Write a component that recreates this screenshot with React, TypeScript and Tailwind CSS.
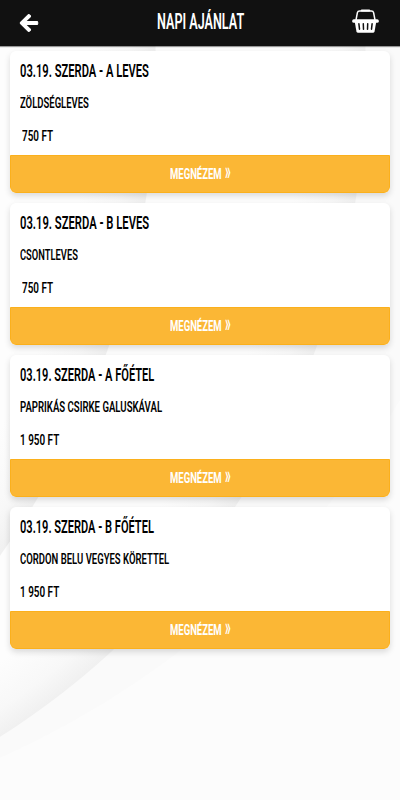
import { useLayoutEffect, useRef, useState } from "react";
import { FaArrowLeft } from "react-icons/fa";

type Offer = {
  title: string;
  titleWidth: number;
  dish: string;
  dishWidth: number;
  price: string;
  priceWidth: number;
  priceClass: string;
};

const offers: Offer[] = [
  { title: "03.19. SZERDA - A LEVES", titleWidth: 129, dish: "ZÖLDSÉGLEVES", dishWidth: 69, price: "750 FT", priceWidth: 31, priceClass: "ml-[2px]" },
  { title: "03.19. SZERDA - B LEVES", titleWidth: 129, dish: "CSONTLEVES", dishWidth: 58, price: "750 FT", priceWidth: 31, priceClass: "ml-[2px]" },
  { title: "03.19. SZERDA - A FŐÉTEL", titleWidth: 134, dish: "PAPRIKÁS CSIRKE GALUSKÁVAL", dishWidth: 142, price: "1 950 FT", priceWidth: 39, priceClass: "" },
  { title: "03.19. SZERDA - B FŐÉTEL", titleWidth: 134, dish: "CORDON BELU VEGYES KÖRETTEL", dishWidth: 149, price: "1 950 FT", priceWidth: 39, priceClass: "" },
];

type CondensedProps = {
  text: string;
  /** rendered width in px */
  width: number;
  className?: string;
};

// Squeezes a regular face horizontally so it reads as a condensed display font
function Condensed({ text, width, className = "" }: CondensedProps) {
  const ref = useRef<HTMLSpanElement>(null);
  const [scale, setScale] = useState(0.6);

  useLayoutEffect(() => {
    if (ref.current) setScale(width / ref.current.offsetWidth);
  }, [text, width]);

  return (
    <span className={`block whitespace-nowrap text-left ${className}`} style={{ width }}>
      <span
        ref={ref}
        className="inline-block origin-left"
        style={{ transform: `scaleX(${scale})` }}
      >
        {text}
      </span>
    </span>
  );
}

function BasketIcon() {
  return (
    <svg width="27" height="24" viewBox="0 0 27 24" fill="none">
      <path d="M4 11 5.4 3.6Q5.8 1.9 7.6 1.9h11.8q1.8 0 2.2 1.7L23 11" stroke="#fff" strokeWidth="1.5" />
      <path d="M9.8 1.5h7.4" stroke="#fff" strokeWidth="2.2" strokeLinecap="round" />
      <rect x="0.2" y="10.2" width="26.6" height="3.6" rx="1.6" fill="#fff" />
      <path d="M2.6 12h21.8l-1.8 10.3q-.3 1.5-1.7 1.5H6.1q-1.4 0-1.7-1.5Z" fill="#fff" />
      <path d="m6.9 14.8.6 5.4M11.3 14.8l.2 5.4M15.7 14.8l-.2 5.4M20.1 14.8l-.6 5.4" stroke="#111" strokeWidth="1.5" strokeLinecap="round" />
    </svg>
  );
}

// Large overlapping discs with a soft shade along their rims
function Backdrop() {
  return (
    <svg className="absolute inset-0 -z-10" width="400" height="800" viewBox="0 0 400 800">
      <defs>
        <radialGradient id="outer" gradientUnits="userSpaceOnUse" cx="-419" cy="73" r="785">
          <stop offset="0.92" stopColor="#fdfdfd" />
          <stop offset="0.97" stopColor="#f8f8f8" />
          <stop offset="1" stopColor="#f0f0f0" />
        </radialGradient>
        <radialGradient id="inner" gradientUnits="userSpaceOnUse" cx="-678" cy="70" r="834">
          <stop offset="0.92" stopColor="#fdfdfd" />
          <stop offset="0.97" stopColor="#f8f8f8" />
          <stop offset="1" stopColor="#f0f0f0" />
        </radialGradient>
      </defs>
      <path d="M0 0H400V400Q260 640 0 758Z" fill="#fafafa" />
      <circle cx="-419" cy="73" r="785" fill="url(#outer)" />
      <circle cx="-678" cy="70" r="834" fill="url(#inner)" />
    </svg>
  );
}

function OfferCard({ offer }: { offer: Offer }) {
  return (
    <article className="h-[142px] overflow-hidden rounded-md bg-white shadow-[0_3px_6px_rgba(0,0,0,0.14)]">
      <div className="flex h-[104px] flex-col px-2.5 pt-2 text-black">
        <Condensed text={offer.title} width={offer.titleWidth} className="h-6 text-[17.5px] leading-6 font-semibold" />
        <Condensed text={offer.dish} width={offer.dishWidth} className="mt-2 h-6 text-[15px] leading-6 font-semibold" />
        <Condensed text={offer.price} width={offer.priceWidth} className={`mt-[9px] h-6 text-[15px] leading-6 font-semibold ${offer.priceClass}`} />
      </div>
      <button className="flex h-[38px] w-full items-center justify-center gap-[3px] rounded-b-md border border-[#fbb01c] bg-[#fbb735] text-white">
        <Condensed text="MEGNÉZEM" width={52} className="text-[15px] leading-6 font-bold" />
        <Condensed text="»" width={6} className="-mt-[4px] text-[25px] leading-6 font-bold" />
      </button>
    </article>
  );
}

export default function App() {
  return (
    <div className="relative isolate min-h-screen overflow-hidden bg-[#fcfcfc] font-['Roboto',sans-serif]">
      <Backdrop />
      <header className="flex h-[46px] items-center justify-between bg-[#111] pr-[21.5px] pb-[3px] pl-5 text-white shadow-[0_1px_1px_rgba(0,0,0,0.4)]">
        <button aria-label="Vissza" className="w-[30px] pt-[2px]">
          <FaArrowLeft size={20} className="-ml-px overflow-visible" stroke="#fff" strokeWidth={26} />
        </button>
        <h1 className="pt-px text-[22px] leading-7 font-semibold">
          <Condensed text="NAPI AJÁNLAT" width={87} />
        </h1>
        <button aria-label="Kosár" className="-mt-px">
          <BasketIcon />
        </button>
      </header>
      <main className="flex flex-col gap-2.5 px-2.5 pt-[5px]">
        {offers.map((offer) => (
          <OfferCard key={offer.title} offer={offer} />
        ))}
      </main>
    </div>
  );
}
